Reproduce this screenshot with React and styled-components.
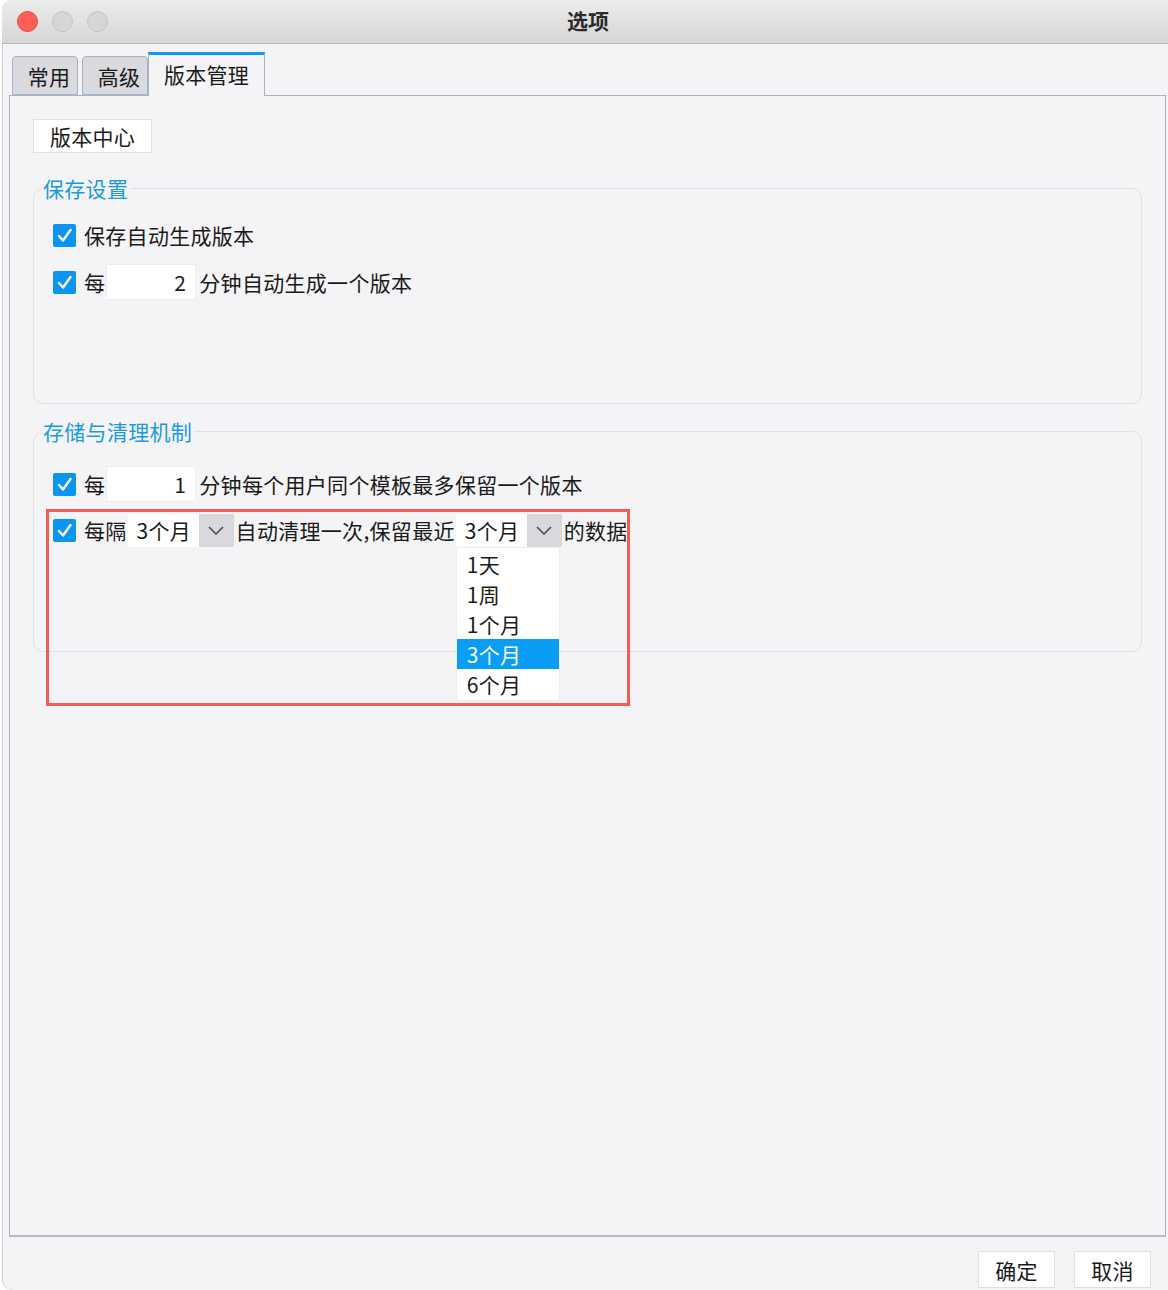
import React from "react";
import styled, { createGlobalStyle } from "styled-components";

const GlobalStyle = createGlobalStyle`
  body {
    margin: 0;
    background: #ffffff;
    font-family: "Noto Sans CJK SC", "Noto Sans", sans-serif;
    color: #1a1a1a;
  }
`;

const Window = styled.div`
  margin-left: 2px;
  width: 1166px;
  height: 1290px;
  background: #f4f4f6;
  border-radius: 10px 0 0 10px;
  box-shadow: inset 1px 0 0 #cfcfd2;
  overflow: hidden;
  display: flex;
  flex-direction: column;
`;

const TitleBar = styled.div`
  height: 43px;
  flex-shrink: 0;
  border-bottom: 1px solid #b8b8b8;
  background: linear-gradient(#ececec, #d6d6d6);
  display: grid;
  grid-template-columns: 1fr auto 1fr;
  align-items: center;
`;

const Lights = styled.div`
  display: flex;
  gap: 14px;
  padding-left: 15px;
`;

const Light = styled.span`
  width: 21px;
  height: 21px;
  border-radius: 50%;
  box-sizing: border-box;
  background: ${p => (p.red ? "#fe5f57" : "#d6d6d6")};
  border: 1px solid ${p => (p.red ? "#e4463f" : "#c4c4c4")};
`;

const Title = styled.div`
  font-size: 21px;
  font-weight: 700;
  color: #2b2b2b;
  padding: 0 0 4px 6px;
`;

const TabStrip = styled.div`
  display: flex;
  align-items: flex-end;
  height: 43px;
  margin-top: 8px;
  padding-left: 10px;
  gap: 4px;
  position: relative;
  z-index: 2;
`;

const Tab = styled.div`
  box-sizing: border-box;
  width: ${p => p.w}px;
  height: ${p => (p.active ? 44 : 39)}px;
  margin-left: ${p => (p.active ? -4 : 0)}px;
  margin-bottom: ${p => (p.active ? -1 : 0)}px;
  font-size: 21px;
  letter-spacing: 0.3px;
  display: flex;
  align-items: center;
  justify-content: center;
  padding-left: ${p => (p.active ? 0 : 8)}px;
  padding-bottom: ${p => (p.active ? 4 : 0)}px;
  background: ${p => (p.active ? "#f4f4f6" : "#d9d9de")};
  border: 1px solid #a6b2c6;
  border-bottom: ${p => (p.active ? "none" : "1px solid #a6b2c6")};
  border-top: ${p => (p.active ? "3px solid #1697f2" : "1px solid #a6b2c6")};
  border-radius: ${p => (p.active ? "0" : "4px 4px 0 0")};
`;

const Panel = styled.div`
  box-sizing: border-box;
  height: 1142px;
  margin: 0 2px 0 7px;
  border: 1px solid #a6b2c6;
  border-bottom: 2px solid #b4bccb;
  padding: 23px 23px 0 23px;
`;

const PlainButton = styled.div`
  box-sizing: border-box;
  width: ${p => p.w}px;
  height: ${p => p.h}px;
  background: #ffffff;
  border: 1px solid #e0e0e2;
  font-size: 21px;
  letter-spacing: 0.3px;
  display: flex;
  align-items: center;
  justify-content: center;
`;

const Group = styled.fieldset`
  margin: ${p => p.top}px 0 0 0;
  border: 1px solid #e2e2e6;
  border-radius: 10px;
  padding: ${p => p.padTop}px 19px 103px 19px;
  display: flex;
  flex-direction: column;
  gap: ${p => p.gap}px;
`;

const Legend = styled.legend`
  margin-left: -12px;
  padding: 0 2px;
  font-size: 21px;
  letter-spacing: 0.3px;
  line-height: 30px;
  color: #1b9ae0;
`;

const Row = styled.div`
  position: relative;
  display: flex;
  align-items: center;
  height: 36px;
  font-size: 21px;
  letter-spacing: 0.3px;
  white-space: nowrap;
`;

const Box = styled.span`
  width: 23px;
  height: 23px;
  border-radius: 2px;
  background: #0b95f3;
  margin-right: 8px;
  display: flex;
  align-items: center;
  justify-content: center;
`;

const NumInput = styled.div`
  box-sizing: border-box;
  width: 90px;
  height: 36px;
  margin: 0 3px 0 1px;
  padding-right: 9px;
  background: #ffffff;
  border: 1px solid #ededee;
  display: flex;
  align-items: center;
  justify-content: flex-end;
`;

const Select = styled.div`
  position: relative;
  display: flex;
  height: 33px;
  margin: 0 2px 0 1px;
`;

const SelectValue = styled.div`
  width: 71px;
  padding-left: 9px;
  box-sizing: border-box;
  background: #ffffff;
  display: flex;
  align-items: center;
`;

const SelectArrow = styled.div`
  width: 35px;
  background: #d9d9dd;
  display: flex;
  align-items: center;
  justify-content: center;
`;

const Menu = styled.div`
  position: absolute;
  top: 100%;
  left: 0;
  width: 104px;
  box-sizing: border-box;
  padding: 1px 0;
  background: #ffffff;
  border: 1px solid #ececee;
  z-index: 3;
`;

const MenuItem = styled.div`
  height: 30px;
  padding-left: 10px;
  display: flex;
  align-items: center;
  background: ${p => (p.selected ? "#0a9df5" : "transparent")};
  color: ${p => (p.selected ? "#ffffff" : "#1a1a1a")};
`;

const Highlight = styled.div`
  position: absolute;
  top: -3px;
  left: -7px;
  width: 584px;
  height: 197px;
  box-sizing: border-box;
  border: 3px solid #f35c52;
  pointer-events: none;
  z-index: 4;
`;

const Footer = styled.div`
  display: flex;
  justify-content: flex-end;
  gap: 19px;
  padding: 14px 17px 0 0;
`;

const Check = () => (
  <Box>
    <svg width="17" height="17" viewBox="0 0 17 17">
      <polyline points="3,9 7,13.5 14.5,3" fill="none" stroke="#fff" strokeWidth="2.4" strokeLinecap="round" strokeLinejoin="round" />
    </svg>
  </Box>
);

const Chevron = () => (
  <svg width="16" height="9" viewBox="0 0 16 9">
    <polyline points="1,1 8,8 15,1" fill="none" stroke="#4a4a4a" strokeWidth="1.5" />
  </svg>
);

const options = ["1天", "1周", "1个月", "3个月", "6个月"];

export default function App() {
  return (
    <>
      <GlobalStyle />
      <Window>
        <TitleBar>
          <Lights>
            <Light red />
            <Light />
            <Light />
          </Lights>
          <Title>选项</Title>
          <div />
        </TitleBar>
        <TabStrip>
          <Tab w={66}>常用</Tab>
          <Tab w={66}>高级</Tab>
          <Tab w={117} active>版本管理</Tab>
        </TabStrip>
        <Panel>
          <PlainButton w={119} h={34}>版本中心</PlainButton>
          <Group top={20} padTop={14} gap={11}>
            <Legend>保存设置</Legend>
            <Row>
              <Check />
              保存自动生成版本
            </Row>
            <Row>
              <Check />
              每
              <NumInput>2</NumInput>
              分钟自动生成一个版本
            </Row>
          </Group>
          <Group top={12} padTop={20} gap={10}>
            <Legend>存储与清理机制</Legend>
            <Row>
              <Check />
              每
              <NumInput>1</NumInput>
              分钟每个用户同个模板最多保留一个版本
            </Row>
            <Row>
              <Highlight />
              <Check />
              每隔
              <Select>
                <SelectValue>3个月</SelectValue>
                <SelectArrow><Chevron /></SelectArrow>
              </Select>
              自动清理一次,保留最近
              <Select>
                <SelectValue>3个月</SelectValue>
                <SelectArrow><Chevron /></SelectArrow>
                <Menu>
                  {options.map(o => (
                    <MenuItem key={o} selected={o === "3个月"}>{o}</MenuItem>
                  ))}
                </Menu>
              </Select>
              的数据
            </Row>
          </Group>
        </Panel>
        <Footer>
          <PlainButton w={77} h={37}>确定</PlainButton>
          <PlainButton w={77} h={37}>取消</PlainButton>
        </Footer>
      </Window>
    </>
  );
}
